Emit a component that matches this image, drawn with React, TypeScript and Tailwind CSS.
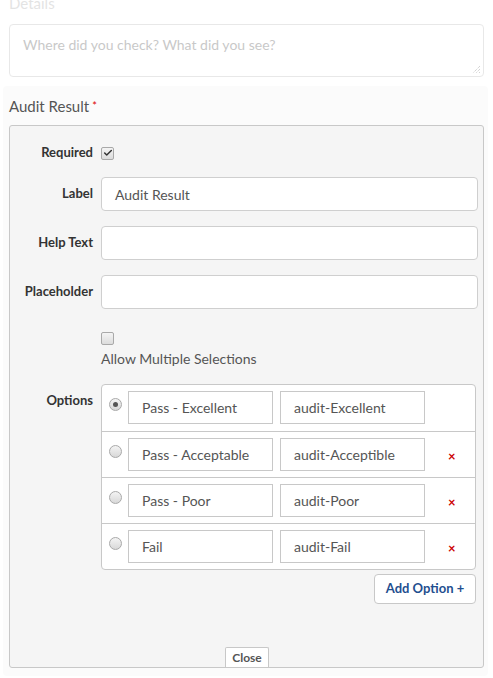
import { Check } from "lucide-react";

const options = [
  { label: "Pass - Excellent", value: "audit-Excellent", selected: true, removable: false },
  { label: "Pass - Acceptable", value: "audit-Acceptible", selected: false, removable: true },
  { label: "Pass - Poor", value: "audit-Poor", selected: false, removable: true },
  { label: "Fail", value: "audit-Fail", selected: false, removable: true },
];

function FakeCheckbox({ checked }: { checked?: boolean }) {
  return (
    <span className="flex h-[13px] w-[13px] items-center justify-center rounded-[2px] border border-[#a9a9a9] bg-gradient-to-b from-[#f4f4f4] to-[#dcdcdc]">
      {checked && <Check size={10} strokeWidth={3.5} className="text-[#333]" />}
    </span>
  );
}

function FakeRadio({ checked }: { checked?: boolean }) {
  return (
    <span className="flex h-[13px] w-[13px] items-center justify-center rounded-full border border-[#a9a9a9] bg-gradient-to-b from-[#f4f4f4] to-[#d8d8d8]">
      {checked && <span className="h-[5px] w-[5px] rounded-full bg-[#555]" />}
    </span>
  );
}

function FieldRow({ label, value }: { label: string; value?: string }) {
  return (
    <div className="flex items-center">
      <div className="w-[83px] text-right text-[13px] font-bold text-[#333]">{label}</div>
      <div className="ml-[8px] flex h-[34px] flex-1 items-center rounded-[4px] border border-[#cfcfcf] bg-white px-[13px] text-[14px] text-[#555]">
        {value}
      </div>
    </div>
  );
}

export default function App() {
  return (
    <div
      className="h-[678px] w-[493px] overflow-hidden bg-white text-[#555]"
      style={{ fontFamily: "Lato, 'Open Sans', sans-serif" }}
    >
      {/* faded section above */}
      <div className="px-[9px] opacity-40">
        <div className="-mt-[7px] h-[31px] text-[15px] leading-[20px] text-[#bbb]">Details</div>
        <div className="relative h-[53px] rounded-[4px] border border-[#c8c8c8] bg-white px-[13px] pt-[9px] text-[14px] text-[#777]">
          Where did you check? What did you see?
          <svg className="absolute bottom-[2px] right-[2px]" width="9" height="9" viewBox="0 0 9 9">
            <path d="M8 1L1 8M8 4L4 8M8 7L7 8" stroke="#666" strokeWidth="1" strokeDasharray="1 1" />
          </svg>
        </div>
      </div>

      <div className="mx-[3px] mt-[9px] flex h-[590px] w-[485px] flex-col rounded-[4px] bg-[#fbfbfb] pb-[8px]">
        <div className="mt-[10px] flex h-[20px] items-center px-[6px] text-[15px] text-[#555]">
          Audit Result<span className="ml-[3px] text-[11px] text-[#d00]">*</span>
        </div>

        <div className="ml-[6px] mt-[9px] flex w-[475px] flex-1 flex-col rounded-[3px] border border-[#c8c8c8] bg-[#f5f5f5] pr-[5px]">
          <div className="mt-[17px] flex h-[20px] items-center">
            <div className="w-[83px] text-right text-[13px] font-bold text-[#333]">Required</div>
            <div className="ml-[8px]">
              <FakeCheckbox checked />
            </div>
          </div>

          <div className="mt-[14px] flex flex-col gap-[15px]">
            <FieldRow label="Label" value="Audit Result" />
            <FieldRow label="Help Text" />
            <FieldRow label="Placeholder" />
          </div>

          <div className="ml-[91px] mt-[23px] flex flex-col">
            <FakeCheckbox />
            <div className="mt-[4px] text-[14px] leading-[20px] text-[#555]">Allow Multiple Selections</div>
          </div>

          <div className="mt-[15px] flex items-start">
            <div className="w-[83px] pt-[7px] text-right text-[13px] font-bold text-[#333]">Options</div>
            <div className="ml-[8px] w-[375px] rounded-[4px] border border-[#c8c8c8] bg-white">
              {options.map((o, i) => (
                <div
                  key={o.value}
                  className={`flex h-[46px] items-start pt-[6px] ${i > 0 ? "border-t border-[#c8c8c8]" : ""}`}
                >
                  <div className="ml-[7px] mt-[7px]">
                    <FakeRadio checked={o.selected} />
                  </div>
                  <div className="ml-[6px] flex h-[33px] w-[145px] items-center border border-[#c8c8c8] px-[13px] text-[14px] text-[#555]">
                    {o.label}
                  </div>
                  <div className="ml-[7px] flex h-[33px] w-[145px] items-center border border-[#c8c8c8] px-[13px] text-[14px] text-[#555]">
                    {o.value}
                  </div>
                  {o.removable && (
                    <span className="ml-[23px] mt-[10px] text-[13px] font-bold leading-[16px] text-[#c00]">×</span>
                  )}
                </div>
              ))}
            </div>
          </div>

          <div className="mt-[4px] flex justify-end pr-[2px]">
            <button className="h-[30px] w-[102px] rounded-[4px] border border-[#c8c8c8] bg-white text-[13px] font-bold text-[#1f4f8f]">
              Add Option +
            </button>
          </div>

          <div className="ml-[215px] mt-auto flex h-[20px] w-[44px] items-center justify-center rounded-t-[2px] border border-b-0 border-[#c8c8c8] bg-white text-[12px] font-bold text-[#555]">
            Close
          </div>
        </div>
      </div>
    </div>
  );
}
